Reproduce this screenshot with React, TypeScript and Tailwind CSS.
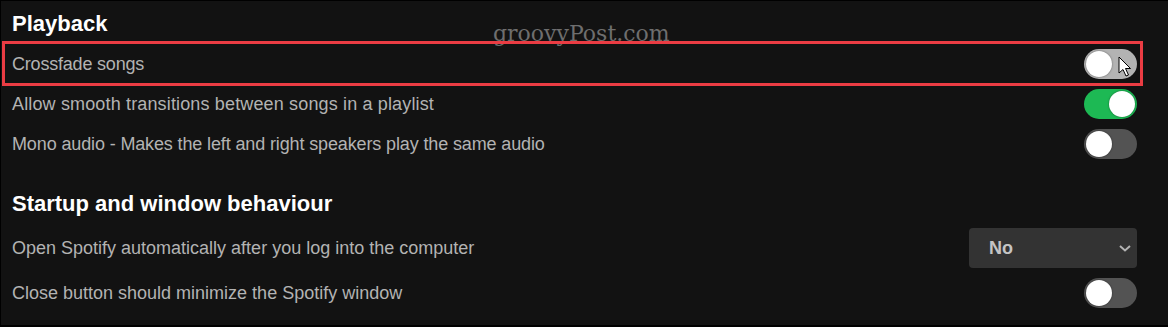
import React from "react";

function Toggle({ on = false, hover = false }: { on?: boolean; hover?: boolean }) {
  const track = on ? "bg-[#1db954] justify-end" : hover ? "bg-[#b3b3b3] justify-start" : "bg-[#535353] justify-start";
  return (
    <div className={`flex h-[30px] w-[53px] items-center rounded-full p-[2px] ${track}`}>
      <div className="h-[26px] w-[26px] rounded-full bg-white shadow-[0_0_2px_rgba(0,0,0,0.5)]" />
    </div>
  );
}

function Row({ label, children, className = "", textClass = "" }: { label: string; children?: React.ReactNode; className?: string; textClass?: string }) {
  return (
    <div className={`flex items-center justify-between pl-[11px] pr-[31px] ${className}`}>
      <span className={`text-[18px] text-[#b3b3b3] ${textClass}`}>{label}</span>
      {children}
    </div>
  );
}

export default function App() {
  return (
    <div
      className="relative h-[327px] w-[1168px] overflow-hidden border-l border-t border-b-2 border-black bg-[#121212]"
      style={{ fontFamily: "'Liberation Sans', Arial, sans-serif" }}
    >
      <div className="absolute left-[492px] top-[22px] text-[22px] leading-none text-[#6e6e6e]" style={{ fontFamily: "'DejaVu Serif', serif" }}>
        groovyPost.com
      </div>

      <div className="relative flex h-[43px] items-center pl-[11px] pt-[1px]">
        <h2 className="text-[22px] font-bold text-white">Playback</h2>
      </div>
      <Row label="Crossfade songs" className="relative h-[40px]" textClass="tracking-[-0.2px]">
        <Toggle hover />
      </Row>
      <Row label="Allow smooth transitions between songs in a playlist" className="h-[40px]" textClass="tracking-[0.15px]">
        <Toggle on />
      </Row>
      <Row label="Mono audio - Makes the left and right speakers play the same audio" className="h-[40px]" textClass="tracking-[-0.13px]">
        <Toggle />
      </Row>

      <div className="mt-[19px] flex h-[40px] items-center pl-[11px]">
        <h2 className="text-[22px] font-bold text-white">Startup and window behaviour</h2>
      </div>
      <Row label="Open Spotify automatically after you log into the computer" className="mt-[5px] h-[40px]">
        <div className="flex h-[40px] w-[168px] items-center justify-between rounded-[4px] bg-[#333333] pl-[20px] pr-[5px]">
          <span className="text-[18px] font-bold text-[#c4c4c4]">No</span>
          <svg width="14" height="10" viewBox="0 0 14 10" fill="none">
            <path d="M2 3l5 4.5L12 3" stroke="#b3b3b3" strokeWidth="2" />
          </svg>
        </div>
      </Row>
      <Row label="Close button should minimize the Spotify window" className="h-[50px]">
        <Toggle />
      </Row>

      <div className="pointer-events-none absolute left-[1px] top-[40px] h-[45px] w-[1141px] border-[3px] border-[#ea3c43]" />

      <svg className="absolute left-[1117px] top-[55px]" width="14" height="22" viewBox="0 0 14 22">
        <path d="M1 1 L1 17 L5 13.5 L8 20 L10.5 19 L7.5 12.5 L12.5 12.5 Z" fill="white" stroke="black" strokeWidth="1" strokeLinejoin="miter" />
      </svg>
    </div>
  );
}
